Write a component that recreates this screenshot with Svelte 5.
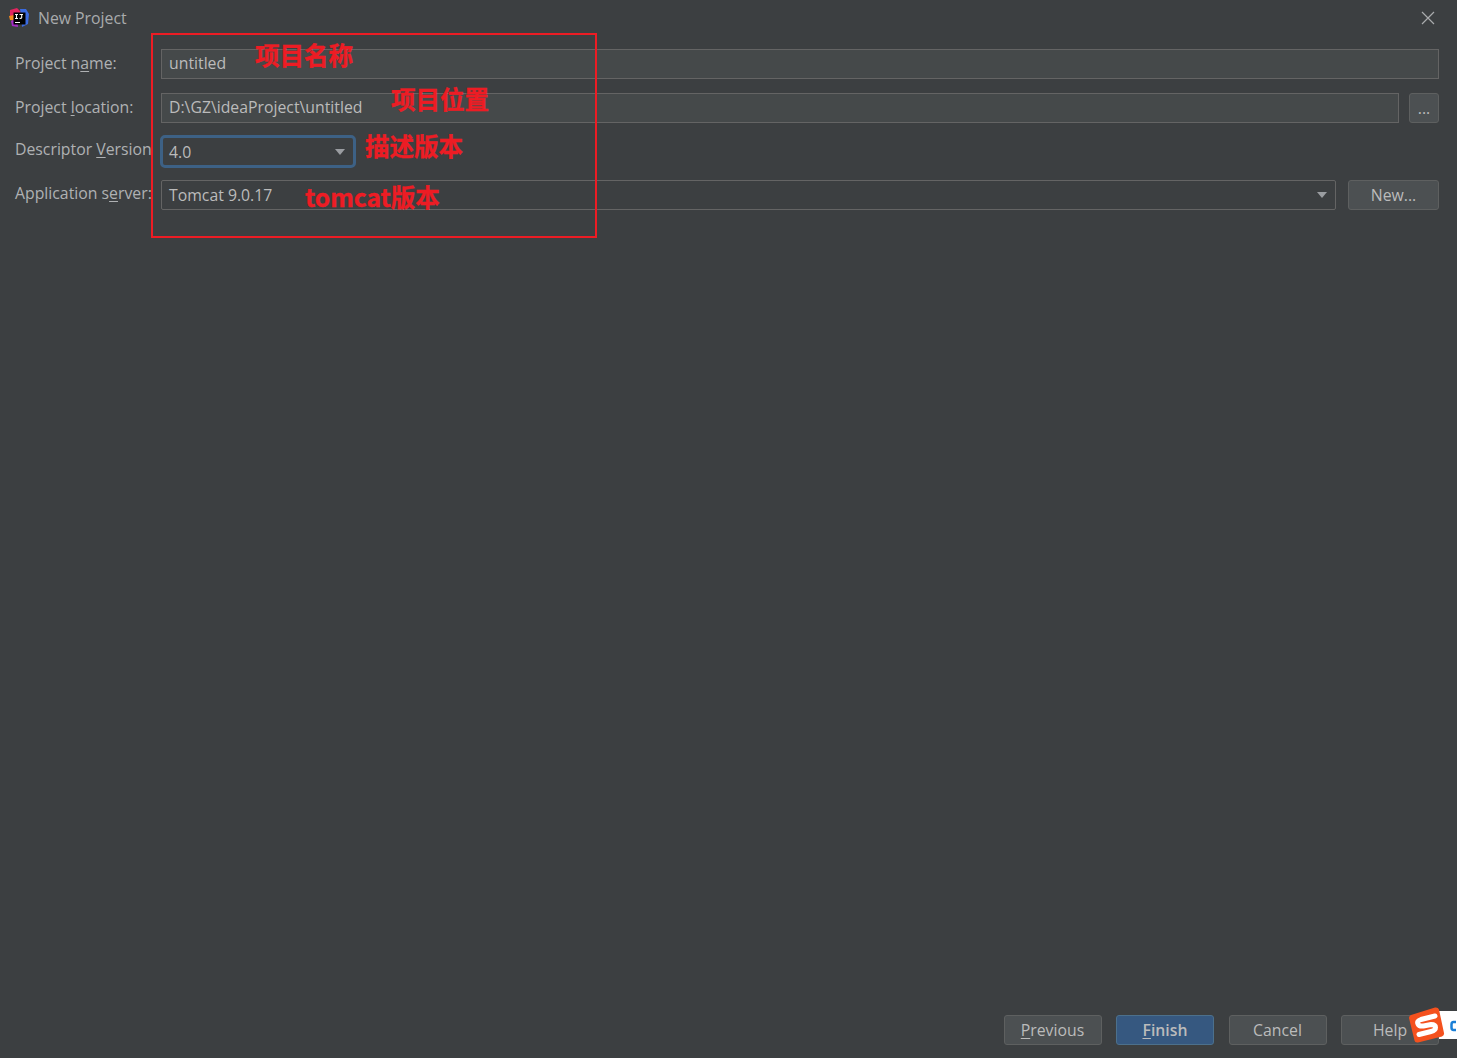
<script>
	const notes = [
		{ text: '项目名称', x: 255, y: 37 },
		{ text: '项目位置', x: 391, y: 81 },
		{ text: '描述版本', x: 365, y: 128 },
		{ text: 'tomcat版本', x: 305, y: 179 }
	];
</script>

<div class="dialog">
	<header class="titlebar">
		<svg class="logo" viewBox="0 0 20 20" width="20" height="20">
			<path d="M1 2 L8 0 L12 4 L6 12 L1 9Z" fill="#e3245f" />
			<path d="M0 8 L5 7 L6 13 L1 12Z" fill="#f58a1f" />
			<path d="M11 1 L17 1 L20 6 L19 16 L13 19 L12 8Z" fill="#3b6be0" />
			<path d="M2 13 L8 10 L9 19 L3 18Z" fill="#a32bc4" />
			<rect x="4.500" y="4.500" width="12" height="12" fill="#000" />
			<path d="M6 6.500 H9 M7.500 6.500 V10.500 M6 10.500 H9 M10.500 6.500 H14 M12.700 6.500 V9.500 Q12.700 10.700 10.500 10.300 M6 14.500 H11" stroke="#fff" stroke-width="1.100" fill="none" />
		</svg>
		<span class="title">New Project</span>
		<svg class="close" viewBox="0 0 14 14" width="14" height="14">
			<path d="M1 1 L13 13 M13 1 L1 13" stroke="#a9abad" stroke-width="1.200" fill="none" />
		</svg>
	</header>

	<main class="form">
		<div class="row">
			<span class="label">Project n<u>a</u>me:</span>
			<div class="field">untitled</div>
		</div>
		<div class="row">
			<span class="label">Project <u>l</u>ocation:</span>
			<div class="field">D:\GZ\ideaProject\untitled</div>
			<button class="browse">...</button>
		</div>
		<div class="row version">
			<span class="label">Descriptor <u>V</u>ersion</span>
			<div class="select focused"><span>4.0</span><i class="arrow"></i></div>
		</div>
		<div class="row server">
			<span class="label">Application s<u>e</u>rver:</span>
			<div class="select grow"><span>Tomcat 9.0.17</span><i class="arrow"></i></div>
			<button class="new">New...</button>
		</div>
	</main>

	<footer class="actions">
		<button><u>P</u>revious</button>
		<button class="primary"><u>F</u>inish</button>
		<button>Cancel</button>
		<button>Help</button>
	</footer>

	<!-- red annotations drawn over the dialog -->
	<div class="redbox"></div>
	{#each notes as note}
		<span class="note" style="left:{note.x}px;top:{note.y}px">{note.text}</span>
	{/each}

	<!-- input method widget in the corner -->
	<div class="ime">
		<svg viewBox="0 0 48 36" width="48" height="36">
			<rect x="30" y="4" width="18" height="28" fill="#fff" />
			<path d="M47 15 H44.500 Q42.500 15 42.500 17.500 V20.500 Q42.500 23 44.500 23 H47" stroke="#1b7fd6" stroke-width="2.500" fill="none" />
			<path d="M2 8 L26 0.500 Q29 0 30 2.500 L35 26 Q35.500 28.500 33 29.500 L9 35.500 Q6 36 5.500 33.500 L0 11 Q0 9 2 8Z" fill="#f4511e" />
			<path d="M26 9 L12 12.500 Q7.500 14 9 17 Q10 19.500 14.500 19 L22 17.500 Q26.500 17.500 26.500 20.500 Q26.500 23.500 22 24.500 L10 27.500" stroke="#fff" stroke-width="5" fill="none" stroke-linecap="round" />
		</svg>
	</div>
</div>

<style>
	:global(body) {
		background: #3c3f41;
	}

	.dialog {
		position: relative;
		height: 1058px;
		display: flex;
		flex-direction: column;
		background: #3c3f41;
		color: #bbbbbb;
		font-family: "Open Sans", "Liberation Sans", sans-serif;
		font-size: 15.800px;
		overflow: hidden;
	}

	.titlebar {
		display: flex;
		align-items: center;
		height: 36px;
		padding: 0 22px 0 9px;
		flex-shrink: 0;
	}

	.logo {
		margin-right: 9px;
	}

	.title {
		color: #a9abad;
		flex: 1;
	}

	.form {
		display: flex;
		flex-direction: column;
		gap: 14px;
		padding: 13px 18px 0 15px;
		flex: 1;
	}

	.row {
		display: flex;
		align-items: center;
		height: 30px;
		gap: 10px;
	}

	.row.version {
		margin-top: -1px;
		height: 31px;
		margin-bottom: -1px;
	}

	.label {
		width: 146px;
		margin-right: -10px;
		flex-shrink: 0;
		white-space: nowrap;
		color: #afb1b3;
		padding-bottom: 3px;
	}

	.version .label {
		padding-bottom: 6px;
	}

	.server .label {
		padding-bottom: 5px;
	}

	u {
		text-underline-offset: 2px;
	}

	.field {
		flex: 1;
		height: 30px;
		box-sizing: border-box;
		padding: 0 7px;
		line-height: 26px;
		background: #45494a;
		border: 1px solid #646464;
		color: #bbbbbb;
	}

	.select {
		display: flex;
		align-items: center;
		justify-content: space-between;
		box-sizing: border-box;
		height: 30px;
		padding: 0 8px 0 7px;
		border: 1px solid #646464;
		border-radius: 2px;
		background: #3c3f41;
	}

	.select.grow {
		flex: 1;
		margin-right: 2px;
	}

	.select.focused {
		width: 196px;
		height: 33px;
		margin-left: -1px;
		border: 3px solid #3d6185;
		border-radius: 5px;
		padding: 0 8px 0 6px;
	}

	.arrow {
		width: 0;
		height: 0;
		border-left: 5px solid transparent;
		border-right: 5px solid transparent;
		border-top: 6px solid #9a9da1;
	}

	button {
		height: 30px;
		box-sizing: border-box;
		padding: 0;
		background: #4c5052;
		border: 1px solid #5e6060;
		border-radius: 3px;
		color: #bbbbbb;
		font: inherit;
	}

	.browse {
		width: 30px;
	}

	.new {
		width: 91px;
	}

	.actions {
		display: flex;
		justify-content: flex-end;
		gap: 14.500px;
		padding: 0 18px 13px 0;
	}

	.actions button {
		width: 98px;
	}

	.actions .primary {
		background: #365880;
		border-color: #4c708c;
		font-weight: 600;
	}

	.redbox {
		position: absolute;
		left: 151px;
		top: 33px;
		width: 442px;
		height: 201px;
		border: 2px solid #ed1c24;
		pointer-events: none;
	}

	.note {
		position: absolute;
		font-family: "Noto Sans CJK SC", "Liberation Sans", sans-serif;
		font-size: 24.500px;
		line-height: 36px;
		font-weight: 700;
		color: #ed1c24;
		white-space: nowrap;
		-webkit-text-stroke: 0.400px #ed1c24;
	}

	.ime {
		position: absolute;
		left: 1409px;
		top: 1007px;
		line-height: 0;
	}
</style>
